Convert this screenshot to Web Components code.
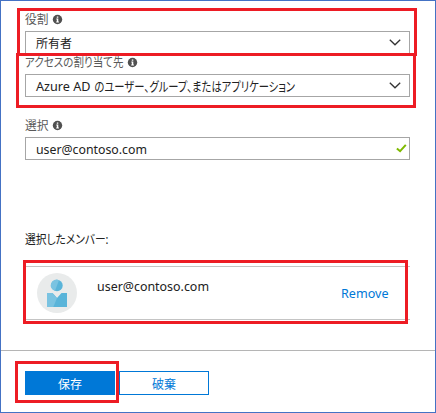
<!DOCTYPE html>
<html lang="ja">
<head>
<meta charset="utf-8">
<title>役割の割り当て</title>
<style>
html,body{margin:0;height:100%;background:#fff}
body{font-family:"Noto Sans","Noto Sans CJK JP",sans-serif}
</style>
</head>
<body>
<role-panel></role-panel>
<script>
const define = (name, html, setup) => customElements.define(name, class extends HTMLElement {
  connectedCallback() {
    if (this.shadowRoot) return;
    const t = document.createElement('template');
    t.innerHTML = html;
    this.attachShadow({mode: 'open'}).append(t.content.cloneNode(true));
    if (setup) setup(this, this.shadowRoot);
  }
});

// A line of text set to a given width; "lead" gives the width of a Latin lead-in run.
define('fit-text', `<style>:host{display:block;flex:none;height:18px}svg{display:block;overflow:visible}text{fill:currentColor;font-feature-settings:"palt"}</style><svg height="18"></svg>`, (el, root) => {
  const NS = 'http://www.w3.org/2000/svg', svg = root.querySelector('svg');
  const w = +el.getAttribute('w'), size = el.getAttribute('size') || 12;
  svg.setAttribute('width', w);
  const add = (str, x, len, fontSize) => {
    const t = document.createElementNS(NS, 'text');
    t.textContent = str;
    t.setAttribute('x', x); t.setAttribute('y', 14);
    t.setAttribute('font-size', fontSize);
    t.setAttribute('textLength', len);
    t.setAttribute('lengthAdjust', 'spacingAndGlyphs');
    svg.append(t);
  };
  const lead = el.getAttribute('lead');
  if (lead) { add(lead, 0, 54.5, 12); add(el.getAttribute('text'), 58.5, w - 58.5, size); }
  else add(el.getAttribute('text'), 0, w, size);
});

define('info-icon', `<style>:host{display:block;flex:none;width:9px;height:9px}svg{display:block;overflow:visible}</style>
<svg width="9" height="9" viewBox="0 0 9 9"><circle cx="4.5" cy="4.5" r="4.7" fill="#505050"/><path d="M3.8 1.4h1.5v1.3H3.8zM3.3 3.6h2v2.9h.6v.9H3.2v-.9h.6V4.4h-.5z" fill="#fff"/></svg>`);

define('chevron-icon', `<style>:host{display:block;width:12px;height:7px}svg{display:block}</style>
<svg width="12" height="7" viewBox="0 0 12 7"><path d="M.8.7 6 5.8 11.2.7" fill="none" stroke="#333" stroke-width="1.3"/></svg>`);

define('valid-icon', `<style>:host{display:block;width:11px;height:9px}svg{display:block}</style>
<svg width="11" height="9" viewBox="0 0 11 9"><path d="M.9 4.4 4.1 7.2 9.8.9" fill="none" stroke="#7fba00" stroke-width="2"/></svg>`);

define('user-avatar', `<style>:host{display:block;flex:none;width:40px;height:40px}svg{display:block}</style>
<svg width="40" height="40" viewBox="0 0 40 40"><circle cx="20" cy="20" r="20" fill="#e9ebeb"/>
<circle cx="20" cy="12.5" r="5.7" fill="#59b4d9"/><path d="M22 7.2A5.7 5.7 0 1 0 18 17.8z" fill="#7ac3e1"/>
<path d="M10 20h5.5l4.5 5 4.5-5H30v14H10z" fill="#59b4d9"/><path d="M10 20h5.5l4.5 5-3.7 9H10z" fill="#7ac3e1"/></svg>`);

define('form-field', `<style>
:host{display:block;height:43px}
.label{display:flex;align-items:center;gap:4.5px;height:20px;color:#595959}
.box{box-sizing:border-box;display:flex;align-items:center;justify-content:space-between;height:23px;border:1px solid #a6a6a6;margin-top:2px;padding:0 0 0 9.5px;color:#222;background:#fff}
.icon{padding-right:var(--icon-pad,8px)}
</style><div class="label"><slot name="label"></slot><info-icon></info-icon></div>
<div class="box"><slot></slot><div class="icon"><slot name="icon"></slot></div></div>`);

define('member-row', `<style>
:host{box-sizing:border-box;display:flex;height:54px;border-top:1px solid #c4c4c4;border-bottom:1px solid #c4c4c4;padding:6px 22px 0 12px}
.name{margin:4px auto 0 20px;color:#222}.action{margin-top:11px;color:#0078d7}
</style><user-avatar></user-avatar><div class="name"><slot></slot></div><div class="action"><slot name="action"></slot></div>`);

define('push-button', `<style>
:host{box-sizing:border-box;display:flex;align-items:center;justify-content:center;width:90px;height:24px;border:1px solid #0078d7;padding-top:1px;color:#0078d7;background:#fff}
:host([primary]){background:#0078d7;color:#fff}
</style><slot></slot>`);

// Annotation frame lying over the form.
define('mark-frame', `<style>:host{position:absolute;box-sizing:border-box;border:3px solid #ed1c24;pointer-events:none}</style>`,
  el => { ['left','top','width','height'].forEach((k, i) => el.style[k] = el.getAttribute('rect').split(' ')[i] + 'px'); });

define('role-panel', `<style>
:host{box-sizing:border-box;display:flex;flex-direction:column;position:relative;width:436px;height:413px;border:1px solid #4472c4;background:#fff;overflow:hidden}
main{display:flex;flex-direction:column;flex:none;box-sizing:border-box;width:409px;height:349px;padding:8px 0 0 24px}
.assign{margin-bottom:20px}.pick{--icon-pad:2px}
.heading{margin:72px 0 18px;color:#222}
footer{display:flex;flex:1;gap:4px;border-top:1px solid #b5b5b5;padding:20px 24px 0}
</style>
<main>
<form-field><fit-text slot="label" w="23.5" text="役割"></fit-text><fit-text w="36" text="所有者"></fit-text><chevron-icon slot="icon"></chevron-icon></form-field>
<form-field class="assign"><fit-text slot="label" w="98.5" size="12.5" text="アクセスの割り当て先"></fit-text><fit-text w="259" size="13" lead="Azure AD" text="のユーザー、グループ、またはアプリケーション"></fit-text><chevron-icon slot="icon"></chevron-icon></form-field>
<form-field class="pick"><fit-text slot="label" w="23.5" text="選択"></fit-text><fit-text w="111" text="user@contoso.com"></fit-text><valid-icon slot="icon"></valid-icon></form-field>
<fit-text class="heading" w="83.5" size="12.5" text="選択したメンバー:"></fit-text>
<member-row><fit-text w="112" text="user@contoso.com"></fit-text><fit-text slot="action" w="47.5" text="Remove"></fit-text></member-row>
</main>
<footer><push-button primary><fit-text w="24" text="保存"></fit-text></push-button><push-button><fit-text w="24" text="破棄"></fit-text></push-button></footer>
<mark-frame rect="16 7 400 48"></mark-frame>
<mark-frame rect="15 52 400 55"></mark-frame>
<mark-frame rect="22 259 385 64"></mark-frame>
<mark-frame rect="14 360 104 42"></mark-frame>`);
</script>
</body>
</html>
